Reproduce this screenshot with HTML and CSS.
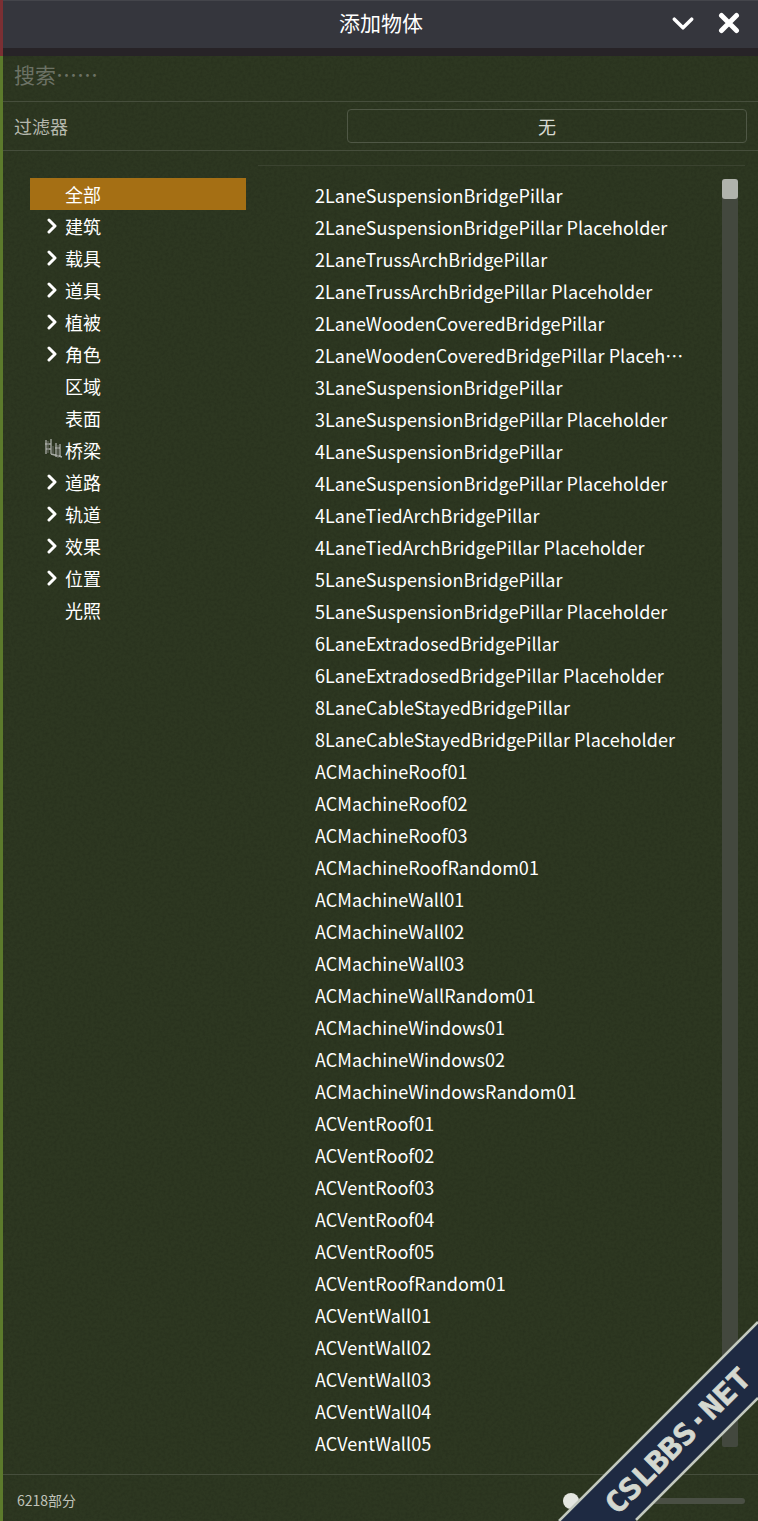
FILE: index.html
```html
<!DOCTYPE html>
<html lang="zh-CN">
<head>
<meta charset="utf-8">
<title>添加物体</title>
<link rel="stylesheet" href="styles.css">
</head>
<body>
<div class="window">
  <header class="titlebar">
    <h1 class="title">添加物体</h1>
    <svg class="ic-down" viewBox="0 0 20 12"><path d="M2 2l8 8 8-8" fill="none" stroke="#fff" stroke-width="3.2" stroke-linecap="round" stroke-linejoin="round"/></svg>
    <svg class="ic-close" viewBox="0 0 22 22"><path d="M3.5 3.5l15 15M18.5 3.5l-15 15" fill="none" stroke="#fff" stroke-width="5" stroke-linecap="round"/></svg>
  </header>
  <div class="titleshadow"></div>
  <main class="panel">
    <svg class="texture" width="758" height="1465"><filter id="grain"><feTurbulence type="fractalNoise" baseFrequency="0.35" numOctaves="3" seed="5"/><feColorMatrix values="0 0 0 0 0  0 0 0 0 0  0 0 0 0 0  1.5 0 0 0 -0.6"/></filter><rect width="758" height="1465" filter="url(#grain)" opacity="0.13"/></svg>
    <div class="search">搜索……</div>
    <div class="filter">
      <span class="filter-label">过滤器</span>
      <button class="filter-btn">无</button>
    </div>
    <div class="content">
      <nav class="tree">
        <div class="tree-row selected"><span class="arrow"></span>全部</div>
        <div class="tree-row"><span class="arrow"><svg viewBox="0 0 10 16"><path d="M2 2l6 6-6 6" class="chev"/></svg></span>建筑</div>
        <div class="tree-row"><span class="arrow"><svg viewBox="0 0 10 16"><path d="M2 2l6 6-6 6" class="chev"/></svg></span>载具</div>
        <div class="tree-row"><span class="arrow"><svg viewBox="0 0 10 16"><path d="M2 2l6 6-6 6" class="chev"/></svg></span>道具</div>
        <div class="tree-row"><span class="arrow"><svg viewBox="0 0 10 16"><path d="M2 2l6 6-6 6" class="chev"/></svg></span>植被</div>
        <div class="tree-row"><span class="arrow"><svg viewBox="0 0 10 16"><path d="M2 2l6 6-6 6" class="chev"/></svg></span>角色</div>
        <div class="tree-row"><span class="arrow"></span>区域</div>
        <div class="tree-row"><span class="arrow"></span>表面</div>
        <div class="tree-row"><span class="arrow"><svg class="bridge" viewBox="0 0 20 20"><path d="M2 1v14M7 0v15M1 5h6M2 10h5M12 4v14M16 5v13M11 9h5M7 15l11 3" fill="none" stroke="#a9aca6" stroke-width="1.3"/><path d="M4 2v12M14 6v13M9 7v8" fill="none" stroke="#6d7068" stroke-width="1.1"/></svg></span>桥梁</div>
        <div class="tree-row"><span class="arrow"><svg viewBox="0 0 10 16"><path d="M2 2l6 6-6 6" class="chev"/></svg></span>道路</div>
        <div class="tree-row"><span class="arrow"><svg viewBox="0 0 10 16"><path d="M2 2l6 6-6 6" class="chev"/></svg></span>轨道</div>
        <div class="tree-row"><span class="arrow"><svg viewBox="0 0 10 16"><path d="M2 2l6 6-6 6" class="chev"/></svg></span>效果</div>
        <div class="tree-row"><span class="arrow"><svg viewBox="0 0 10 16"><path d="M2 2l6 6-6 6" class="chev"/></svg></span>位置</div>
        <div class="tree-row"><span class="arrow"></span>光照</div>
      </nav>
      <section class="listwrap">
        <ul class="list">
          <li>2LaneSuspensionBridgePillar</li>
          <li>2LaneSuspensionBridgePillar Placeholder</li>
          <li>2LaneTrussArchBridgePillar</li>
          <li>2LaneTrussArchBridgePillar Placeholder</li>
          <li>2LaneWoodenCoveredBridgePillar</li>
          <li>2LaneWoodenCoveredBridgePillar Placeholder</li>
          <li>3LaneSuspensionBridgePillar</li>
          <li>3LaneSuspensionBridgePillar Placeholder</li>
          <li>4LaneSuspensionBridgePillar</li>
          <li>4LaneSuspensionBridgePillar Placeholder</li>
          <li>4LaneTiedArchBridgePillar</li>
          <li>4LaneTiedArchBridgePillar Placeholder</li>
          <li>5LaneSuspensionBridgePillar</li>
          <li>5LaneSuspensionBridgePillar Placeholder</li>
          <li>6LaneExtradosedBridgePillar</li>
          <li>6LaneExtradosedBridgePillar Placeholder</li>
          <li>8LaneCableStayedBridgePillar</li>
          <li>8LaneCableStayedBridgePillar Placeholder</li>
          <li>ACMachineRoof01</li>
          <li>ACMachineRoof02</li>
          <li>ACMachineRoof03</li>
          <li>ACMachineRoofRandom01</li>
          <li>ACMachineWall01</li>
          <li>ACMachineWall02</li>
          <li>ACMachineWall03</li>
          <li>ACMachineWallRandom01</li>
          <li>ACMachineWindows01</li>
          <li>ACMachineWindows02</li>
          <li>ACMachineWindowsRandom01</li>
          <li>ACVentRoof01</li>
          <li>ACVentRoof02</li>
          <li>ACVentRoof03</li>
          <li>ACVentRoof04</li>
          <li>ACVentRoof05</li>
          <li>ACVentRoofRandom01</li>
          <li>ACVentWall01</li>
          <li>ACVentWall02</li>
          <li>ACVentWall03</li>
          <li>ACVentWall04</li>
          <li>ACVentWall05</li>
        </ul>
        <div class="scrollbar"><div class="thumb"></div></div>
      </section>
    </div>
    <footer class="footer">
      <span class="count">6218部分</span>
      <div class="slider"><div class="knob"></div></div>
    </footer>
  </main>
</div>
<svg class="watermark" width="200" height="200" viewBox="0 0 200 200">
  <polygon points="200,0 200,77 77,200 0,200" fill="#1e2a42"/>
  <path d="M200 1L1 200M200 77L78 199" stroke="#c3c9bf" stroke-width="2.5" fill="none"/>
  <text x="0" y="0" transform="translate(59 195) rotate(-45)" class="wm-text" textLength="192" lengthAdjust="spacingAndGlyphs">CSLBBS·NET</text>
</svg>
</body>
</html>
```
FILE: styles.css
```css
* { box-sizing: border-box; }
html, body { margin: 0; padding: 0; }
body {
  width: 758px;
  height: 1521px;
  overflow: hidden;
  position: relative;
  background: linear-gradient(to bottom, #7b2f33 0, #7b2f33 56px, #5c7a2c 56px, #5c7a2c 100%);
  font-family: "Noto Sans CJK SC", "Noto Sans", sans-serif;
  color: #fff;
}
.window { margin-left: 3px; height: 1521px; display: flex; flex-direction: column; }
.titlebar {
  height: 48px;
  background: #35363d;
  border-top: 1px solid #44454b;
  position: relative;
  display: flex;
  align-items: center;
  justify-content: center;
}
.title { margin: 0 0 4px 1px; font-size: 21px; font-weight: 400; line-height: 47px; color: #fff; }
.ic-down { position: absolute; left: 669px; top: 16px; width: 22px; height: 13px; }
.ic-close { position: absolute; left: 715px; top: 11px; width: 22px; height: 22px; }
.titleshadow { height: 8px; background: #272327; }
.panel {
  flex: 1;
  min-height: 0;
  background: #2d3721;
  display: flex;
  flex-direction: column;
  position: relative;
}
.texture { position: absolute; left: 0; top: 0; pointer-events: none; }
.search {
  position: relative;
  height: 46px;
  padding: 2px 0 0 11px;
  font-size: 21px;
  line-height: 32px;
  color: #6c7265;
  border-bottom: 1px solid #464e3c;
}
.filter {
  position: relative;
  height: 49px;
  display: flex;
  align-items: center;
  justify-content: space-between;
  padding: 0 11px 0 11px;
  border-bottom: 1px solid #464e3c;
}
.filter-label { font-size: 18px; color: #b5b8ad; line-height: 26px; }
.filter-btn {
  width: 400px;
  height: 34px;
  padding: 0;
  background: transparent;
  border: 1px solid #4f5745;
  border-radius: 4px;
  color: #d8dad3;
  font-family: inherit;
  font-size: 18px;
  line-height: 30px;
}
.content { position: relative; flex: 1; min-height: 0; display: flex; }
.tree { width: 255px; padding: 27px 0 0 27px; flex: none; }
.tree-row {
  width: 216px;
  height: 32px;
  display: flex;
  align-items: center;
  font-size: 18px;
  line-height: 32px;
  color: #fff;
}
.tree-row.selected { background: #a56f14; }
.arrow { width: 35px; height: 32px; flex: none; display: flex; align-items: center; justify-content: flex-end; padding-right: 8px; }
.arrow svg { width: 10px; height: 16px; }
.arrow .bridge { width: 20px; height: 20px; margin-right: -7px; margin-top: -3px; }
.chev { fill: none; stroke: #fff; stroke-width: 3; stroke-linecap: round; stroke-linejoin: round; }
.listwrap {
  flex: 1;
  min-width: 0;
  margin: 14px 13px 0 0;
  border-top: 1px solid #3b4330;
  position: relative;
  height: 1309px;
  overflow: hidden;
}
.list { list-style: none; margin: 13px 0 0; padding: 0 0 0 57px; }
.list li {
  width: 426px;
  padding-right: 56px;
  height: 32px;
  font-size: 18px;
  letter-spacing: 0.04px;
  line-height: 32px;
  color: #fff;
  white-space: nowrap;
  overflow: hidden;
  text-overflow: ellipsis;
}
.scrollbar {
  position: absolute;
  left: 464px;
  top: 13px;
  width: 16px;
  height: 1268px;
  background: #43483e;
  border-radius: 2px;
}
.thumb { width: 16px; height: 20px; background: #b0b3ac; border-radius: 3px; }
.footer {
  position: relative;
  margin-top: auto;
  height: 47px;
  border-top: 1px solid #464e3c;
  display: flex;
  align-items: center;
  justify-content: space-between;
  padding: 5px 13px 0 14px;
}
.count { font-size: 14px; color: #c0c3ba; line-height: 20px; margin-top: -2px; }
.slider { width: 182px; height: 6px; background: #4a4f44; border-radius: 3px; position: relative; }
.knob { position: absolute; left: 0; top: -5px; width: 16px; height: 16px; border-radius: 50%; background: #e4e6e0; }
.watermark { position: absolute; right: 0; bottom: 0; }
.wm-text { font-family: "DejaVu Sans Mono", monospace; font-weight: 700; font-size: 29px; fill: #d4d8d0; stroke: #d4d8d0; stroke-width: 0.7; }
```
